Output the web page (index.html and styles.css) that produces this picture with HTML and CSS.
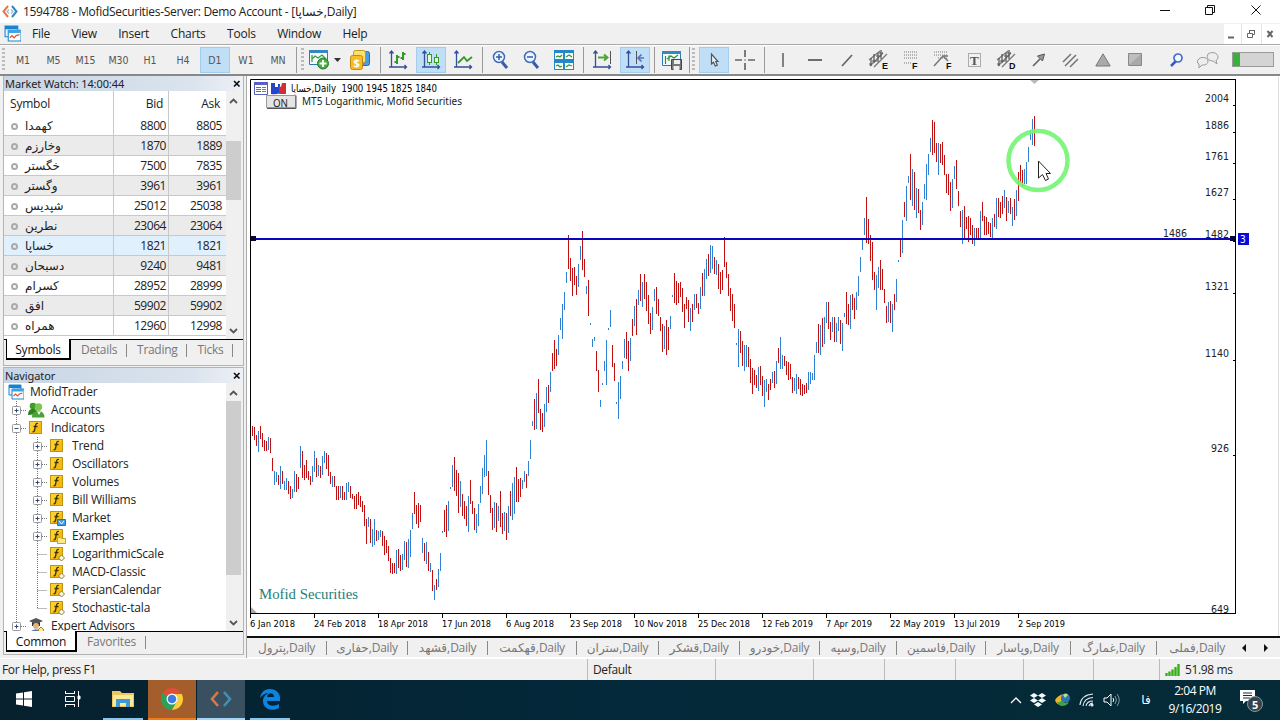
FILE: index.html
```html
<!DOCTYPE html>
<html lang="en">
<head>
<meta charset="utf-8">
<title>MofidTrader</title>
<link rel="stylesheet" href="styles.css">
</head>
<body>
<svg class="defs" aria-hidden="true">
  <symbol id="app" viewBox="0 0 16 16"><path d="M1 1h12v10H1z" fill="#e9f5fd" stroke="#1c86cc"/><path d="M1 1h12v3H1z" fill="#1583d0"/><path d="M4 5h12v10H4z" fill="#fff" stroke="#1c86cc"/><path d="M4 5h11.500v2.500H4z" fill="#38a5e8"/><path d="M5.500 12l2-2 2 2 2-2 3-1" fill="none" stroke="#e0562c" stroke-width="1.200"/></symbol>
  <symbol id="plus" viewBox="0 0 21 18"><path d="M10.500 0v18M15 9.500h6" stroke="#777" stroke-dasharray="1 1"/><rect x="6.500" y="5.500" width="8" height="8" rx="1" fill="#fff" stroke="#999"/><path d="M8.500 9.500h4M10.500 7.500v4" stroke="#33477e"/></symbol>
  <symbol id="minus" viewBox="0 0 21 18"><path d="M10.500 0v18M15 9.500h6" stroke="#777" stroke-dasharray="1 1"/><rect x="6.500" y="5.500" width="8" height="8" rx="1" fill="#fff" stroke="#999"/><path d="M8.500 9.500h4" stroke="#33477e"/></symbol>
  <symbol id="line" viewBox="0 0 21 18"><path d="M10.500 0v18" stroke="#777" stroke-dasharray="1 1"/></symbol>
  <symbol id="mid" viewBox="0 0 21 18"><path d="M10.500 0v18M10.500 9.500h10" stroke="#777" stroke-dasharray="1 1"/></symbol>
  <symbol id="end" viewBox="0 0 21 18"><path d="M10.500 0v10M10.500 9.500h10" stroke="#777" stroke-dasharray="1 1"/></symbol>
  <symbol id="fx" viewBox="0 0 18 16"><rect x="1.500" y="1.500" width="12" height="12" fill="#fbd12e" stroke="#c2930c"/><path d="M2 13L13 2v11z" fill="#f3bb10"/><path d="M10 3.500c-2-.6-2.300.8-2.600 2.500L6.600 10c-.3 1.500-.9 2-2 1.700M5.500 6.500h4" fill="none" stroke="#3d3208" stroke-width="1.300"/></symbol>
  <symbol id="fxcart" viewBox="0 0 18 16"><use href="#fx" width="18" height="16"/><path d="M8.500 9.500h8v6h-8z" fill="#3d9ee8" stroke="#1b74c0"/><path d="M10 11l2.500 3 2.500-3" stroke="#fff" fill="none"/></symbol>
  <symbol id="fxfolder" viewBox="0 0 18 16"><use href="#fx" width="18" height="16"/><path d="M8.500 9.500h3l1 1h4v5h-8z" fill="#fce98c" stroke="#c99e25"/></symbol>
  <symbol id="fxdot" viewBox="0 0 18 16"><use href="#fx" width="18" height="16"/><path d="M12.500 9l3 3-3 3-3-3z" fill="#fffbe0" stroke="#8c7a3a"/></symbol>
  <symbol id="people" viewBox="0 0 18 16"><circle cx="5" cy="4" r="3.300" fill="#3f9d2c"/><path d="M0 13c0-8 9-8 10-1z" fill="#2c8420"/><circle cx="10.500" cy="5" r="3.700" fill="#7ac84e"/><path d="M4 15.500c-.5-9 12.500-9 12.500 0z" fill="#48a534"/><path d="M9 9.500l2 3.500 2-3.500" fill="#fff"/></symbol>
  <symbol id="expert" viewBox="0 0 18 16"><path d="M1 3l7-3 7 3-7 3z" fill="#555"/><path d="M4 4v4h8V4L8 6z" fill="#333"/><circle cx="8" cy="8" r="3" fill="#e4b27e"/><path d="M2 16c0-6 12-6 12 0z" fill="#4a7ab8"/><path d="M13 9l3 3-3 3-3-3z" fill="#ffe69b" stroke="#a88520"/></symbol>
  <symbol id="axes" viewBox="0 0 20 20"><path d="M3.500 1v16h15M1.500 3.500l2-2.500 2 2.500M16.500 15l2 2-2 2M1 17h3" fill="none" stroke="#334f9b" stroke-width="1.300"/></symbol>
  <symbol id="chan" viewBox="0 0 20 20"><path d="M2 17L15 4M6 18L19 5M1 11l11-9" stroke="#777" stroke-width="1.300"/><path d="M3 9v8M6 5v9M10 4v9M13 1v9M4 12h5M8 7h5M1 15h3M11 4h4" stroke="#555" stroke-width="1.200"/></symbol>
</svg>

<header class="titlebar">
  <svg width="17" height="14" viewBox="0 0 17 14"><path d="M6 1L1.500 6.500 6 12" fill="none" stroke="#e5774a" stroke-width="2"/><path d="M10 1l4.500 5.500L10 12" fill="none" stroke="#3586b8" stroke-width="2"/><path d="M7 4.500l-2 2 2 2M9 4.500l2 2-2 2" fill="none" stroke="#8fbcd8" stroke-width="1.200"/></svg>
  <h1>1594788 - MofidSecurities-Server: Demo Account - [خساپا,Daily]</h1>
  <svg class="wincontrols" width="106" height="14" viewBox="0 0 106 14" fill="none" stroke="#111"><path d="M1 7.500h10M46.500 4.500h7v7h-7zM48.500 4.500v-2h7v7h-2M92.500 2.500l9 9M101.500 2.500l-9 9"/></svg>
</header>

<nav class="menubar">
  <svg class="appicon" width="17" height="17"><use href="#app"/></svg>
  <span>File</span><span>View</span><span>Insert</span><span>Charts</span><span>Tools</span><span>Window</span><span>Help</span>
  <svg class="mdi" width="56" height="20" viewBox="0 0 56 20"><path d="M0 0h56v20H0z" fill="#fff"/><path d="M17.500 0v20M37.500 0v20" stroke="#e4e4e4"/><path d="M4 13.500h6" stroke="#666" stroke-width="2"/><path d="M23.500 9.500h5v4h-5zM25.500 9v-2.500h5v4h-2M25 6.500h6" fill="none" stroke="#666"/><path d="M43.500 7l5 6M48.500 7l-5 6" stroke="#666" stroke-width="2"/></svg>
</nav>

<div class="toolbar">
  <i class="grip"></i>
  <b>M1</b><b>M5</b><b>M15</b><b>M30</b><b>H1</b><b>H4</b><b class="on">D1</b><b>W1</b><b>MN</b>
  <i class="sep"></i><i class="grip"></i>
  <svg width="22" height="22" viewBox="0 0 22 22"><path d="M1.500 1.500h18v14h-18z" fill="#f2faff" stroke="#2b7cae"/><path d="M1 1h19v3H1z" fill="#3488bd"/><path d="M4 13V6M4 10l3-3 3 2 4-3 4 4" fill="none" stroke="#3a9d45" stroke-width="1.300"/><circle cx="15" cy="14.500" r="5.500" fill="#45ac3d" stroke="#277e26"/><path d="M15 11v7M11.500 14.500h7" stroke="#fff" stroke-width="2"/></svg>
  <svg width="7" height="4"><path d="M0 0h7L3.500 4z" fill="#333"/></svg>
  <svg width="22" height="22" viewBox="0 0 22 22"><rect x="8.500" y="2.500" width="12" height="14" rx="2" fill="#4c9ae2" stroke="#246eb3"/><rect x="4.500" y="1.500" width="12" height="12" rx="2" fill="#fbe06f" stroke="#c49818"/><rect x="1.500" y="6.500" width="12" height="14" rx="2" fill="#f5bd27" stroke="#bd8b12"/><text x="4.500" y="18" class="dollar">$</text></svg>
  <i class="sep"></i>
  <svg width="20" height="20"><use href="#axes"/><path d="M9 5v9M6.500 12H9M9 7h2.500M15 2v8M12.500 8H15M15 4h2.500" stroke="#329a27" stroke-width="2" fill="none"/></svg>
  <span class="cell on"><svg width="20" height="20"><use href="#axes"/><path d="M8.500 2v13M15.500 4v11" stroke="#329a27"/><rect x="6.500" y="4.500" width="4" height="8" fill="#e9fbe0" stroke="#329a27"/><rect x="13.500" y="7.500" width="4" height="5" fill="#e9fbe0" stroke="#329a27"/></svg></span>
  <svg width="20" height="20"><use href="#axes"/><path d="M5 13l6-6 3 4 5-4" fill="none" stroke="#329a27" stroke-width="1.800"/></svg>
  <i class="sep"></i>
  <svg width="20" height="20" viewBox="0 0 20 20"><path d="M12 12l5 6" stroke="#3b5ca4" stroke-width="3"/><circle cx="9" cy="7" r="5.500" fill="#edf5ff" stroke="#416bb8" stroke-width="1.500"/><path d="M6 7h6M9 4v6" stroke="#315dac" stroke-width="1.500"/></svg>
  <svg width="20" height="20" viewBox="0 0 20 20"><path d="M12 12l5 6" stroke="#3b5ca4" stroke-width="3"/><circle cx="9" cy="7" r="5.500" fill="#edf5ff" stroke="#416bb8" stroke-width="1.500"/><path d="M6 7h6" stroke="#315dac" stroke-width="1.500"/></svg>
  <svg width="20" height="20" viewBox="0 0 20 20"><path d="M0 0h20v20H0z" fill="#2686c8"/><path d="M1 3h8v6H1zM11 3h8v6h-8zM1 13h8v6H1zM11 13h8v6h-8z" fill="#f6fff8"/><path d="M2 7l2-1 2 1 2-2M12 7l3-2 3 2M2 16l2-1 2 2 2-1M12 17l3-2 3 1" fill="none" stroke="#2f9836" stroke-width="1.200"/></svg>
  <i class="sep"></i>
  <svg width="20" height="20"><use href="#axes"/><path d="M18.500 1v13" stroke="#555"/><path d="M6 7.500h9M12 4.500l3.500 3-3.500 3" fill="none" stroke="#48a832" stroke-width="2"/></svg>
  <span class="cell on"><svg width="20" height="20"><use href="#axes"/><path d="M11.500 1v13" stroke="#555"/><path d="M13 8h6M16.500 4.500l-3.500 3.500 3.500 3.500" fill="none" stroke="#5275bd" stroke-width="1.700"/></svg></span>
  <i class="sep"></i>
  <svg width="22" height="22" viewBox="0 0 22 22"><path d="M1.500 2.500h18v14h-18z" fill="#f4fafb" stroke="#2b7cae"/><path d="M1 2h19v3H1z" fill="#3488bd"/><path d="M4.500 15V7M8 12V7h2M6 10l4-3 3 2 4-3" stroke="#328a40" fill="none" stroke-width="1.200"/><path d="M10.500 10.500h10v10h-10z" fill="#777" stroke="#444"/><path d="M13 11h6v4h-6zM12.500 17h6v4h-6z" fill="#eee"/></svg>
  <i class="sep"></i><i class="grip"></i>
  <span class="cell on"><svg width="12" height="18"><path d="M3.500 3v10l2-1.700 1.800 3.700 2-.9-1.600-3.600h2.300z" fill="#e6f2fc" stroke="#555" stroke-width="1.200"/></svg></span>
  <svg width="20" height="22"><path d="M10 1v7M10 14v7M0 11h7M13 11h7M10 10.500v1" stroke="#666" stroke-width="1.700"/></svg>
  <i class="sep"></i>
  <svg width="4" height="16"><path d="M2 1v14" stroke="#666" stroke-width="1.600"/></svg>
  <svg width="14" height="4"><path d="M0 2h14" stroke="#555" stroke-width="1.700"/></svg>
  <svg width="14" height="14"><path d="M2 13L12 2" stroke="#666" stroke-width="1.700"/></svg>
  <svg width="22" height="22"><use href="#chan" width="20" height="20"/><text class="tag" x="14" y="20">E</text></svg>
  <svg width="18" height="20"><path d="M1 2h13M1 5h13M1 8h13M1 13h7" stroke="#777" stroke-dasharray="1 1"/><text class="tag" x="9" y="19">F</text></svg>
  <svg width="20" height="20"><path d="M1 2h14M1 5h14M5 8h10" stroke="#777" stroke-dasharray="1 1"/><path d="M1 16L10 6l5 5M10 6h5" fill="none" stroke="#777" stroke-width="1.500"/><text class="tag" x="13" y="19">F</text></svg>
  <svg width="16" height="18"><path d="M1.500 2.500h12v13h-12z" fill="none" stroke="#666" stroke-dasharray="1 1"/><text class="tee" x="3" y="14">T</text></svg>
  <svg width="22" height="22"><use href="#chan" width="20" height="20"/><text class="tag" x="13" y="20">D</text></svg>
  <svg width="16" height="16"><path d="M2 14L9 7" stroke="#666" stroke-width="1.700"/><path d="M6.500 4l7-2-2 7z" fill="#999" stroke="#555"/></svg>
  <svg width="18" height="16"><path d="M1 10l8-8M3 14L14 3M8 15l8-8" stroke="#777" stroke-width="1.600"/></svg>
  <svg width="16" height="14"><path d="M8 .8L15.200 13H.8z" fill="#aaa" stroke="#777"/></svg>
  <svg width="15" height="15" viewBox="0 0 15 15"><path d="M.5 1.500h13v12H.5z" fill="#a9a9a9" stroke="#888"/><path d="M1 13L1 2h12z" fill="#bebebe"/></svg>
  <svg class="find" width="16" height="16"><path d="M2 14l5-5" stroke="#315bc0" stroke-width="2.500"/><circle cx="9" cy="6" r="4" fill="#f5faff" stroke="#426ccd" stroke-width="1.700"/></svg>
  <svg width="24" height="18" viewBox="0 0 24 18" fill="#eee" stroke="#999"><path d="M12 3c4-3 10-1 10 3 0 2-1 3-2 3l1 4-4-3c-5 0-7-4-5-7z"/><path d="M2 9c2-4 10-3 10 1s-4 4-6 4l-3 3v-4c-2-1-2-3-1-4z"/></svg>
  <i class="battery"></i>
</div>

<main class="workspace">
  <aside>
    <section class="panel watch">
      <h2>Market Watch: 14:00:44<svg width="8" height="8"><path d="M1 1l5.500 5.500M6.500 1L1 6.500" stroke="#111" stroke-width="1.700"/></svg></h2>
      <div class="body">
        <div class="table">
          <div class="row head"><span>Symbol</span><span>Bid</span><span>Ask</span></div>
          <div class="row"><span>کهمدا</span><span>8800</span><span>8805</span></div>
          <div class="row"><span>وخارزم</span><span>1870</span><span>1889</span></div>
          <div class="row"><span>خگستر</span><span>7500</span><span>7835</span></div>
          <div class="row"><span>وگستر</span><span>3961</span><span>3961</span></div>
          <div class="row"><span>شپدیس</span><span>25012</span><span>25038</span></div>
          <div class="row"><span>نطرین</span><span>23064</span><span>23064</span></div>
          <div class="row sel"><span>خساپا</span><span>1821</span><span>1821</span></div>
          <div class="row"><span>دسبحان</span><span>9240</span><span>9481</span></div>
          <div class="row"><span>کسرام</span><span>28952</span><span>28999</span></div>
          <div class="row"><span>افق</span><span>59902</span><span>59902</span></div>
          <div class="row"><span>همراه</span><span>12960</span><span>12998</span></div>
        </div>
        <div class="scroll"><svg width="9" height="6"><path d="M1 5l3.500-3.500L8 5" fill="none" stroke="#555" stroke-width="1.800"/></svg><i></i><svg width="9" height="6"><path d="M1 1l3.500 3.500L8 1" fill="none" stroke="#555" stroke-width="1.800"/></svg></div>
      </div>
      <div class="tabs"><b>Symbols</b><span>Details</span><span>Trading</span><span>Ticks</span></div>
    </section>
    <section class="panel navi">
      <h2>Navigator<svg width="8" height="8"><path d="M1 1l5.500 5.500M6.500 1L1 6.500" stroke="#111" stroke-width="1.700"/></svg></h2>
      <div class="body">
        <ul>
          <li class="root"><svg width="16" height="16"><use href="#app"/></svg>MofidTrader</li>
          <li><svg width="21" height="18"><use href="#plus"/></svg><svg class="l1" width="18" height="16"><use href="#people"/></svg>Accounts</li>
          <li><svg width="21" height="18"><use href="#minus"/></svg><svg class="l1" width="18" height="16"><use href="#fx"/></svg>Indicators</li>
          <li><svg width="21" height="18"><use href="#line"/></svg><svg width="21" height="18"><use href="#plus"/></svg><svg class="l2" width="18" height="16"><use href="#fx"/></svg>Trend</li>
          <li><svg width="21" height="18"><use href="#line"/></svg><svg width="21" height="18"><use href="#plus"/></svg><svg class="l2" width="18" height="16"><use href="#fx"/></svg>Oscillators</li>
          <li><svg width="21" height="18"><use href="#line"/></svg><svg width="21" height="18"><use href="#plus"/></svg><svg class="l2" width="18" height="16"><use href="#fx"/></svg>Volumes</li>
          <li><svg width="21" height="18"><use href="#line"/></svg><svg width="21" height="18"><use href="#plus"/></svg><svg class="l2" width="18" height="16"><use href="#fx"/></svg>Bill Williams</li>
          <li><svg width="21" height="18"><use href="#line"/></svg><svg width="21" height="18"><use href="#plus"/></svg><svg class="l2" width="18" height="16"><use href="#fxcart"/></svg>Market</li>
          <li><svg width="21" height="18"><use href="#line"/></svg><svg width="21" height="18"><use href="#plus"/></svg><svg class="l2" width="18" height="16"><use href="#fxfolder"/></svg>Examples</li>
          <li><svg width="21" height="18"><use href="#line"/></svg><svg width="21" height="18"><use href="#mid"/></svg><svg class="l2" width="18" height="16"><use href="#fxdot"/></svg>LogarithmicScale</li>
          <li><svg width="21" height="18"><use href="#line"/></svg><svg width="21" height="18"><use href="#mid"/></svg><svg class="l2" width="18" height="16"><use href="#fxdot"/></svg>MACD-Classic</li>
          <li><svg width="21" height="18"><use href="#line"/></svg><svg width="21" height="18"><use href="#mid"/></svg><svg class="l2" width="18" height="16"><use href="#fxdot"/></svg>PersianCalendar</li>
          <li><svg width="21" height="18"><use href="#line"/></svg><svg width="21" height="18"><use href="#end"/></svg><svg class="l2" width="18" height="16"><use href="#fxdot"/></svg>Stochastic-tala</li>
          <li><svg width="21" height="18"><use href="#plus"/></svg><svg class="l1" width="18" height="16"><use href="#expert"/></svg>Expert Advisors</li>
        </ul>
        <div class="scroll"><svg width="9" height="6"><path d="M1 5l3.500-3.500L8 5" fill="none" stroke="#555" stroke-width="1.800"/></svg><i></i><svg width="9" height="6"><path d="M1 1l3.500 3.500L8 1" fill="none" stroke="#555" stroke-width="1.800"/></svg></div>
      </div>
      <div class="tabs"><b>Common</b><span>Favorites</span></div>
    </section>
  </aside>

  <section class="chartpane">
    <svg id="chart" width="1033" height="560" viewBox="247 76 1033 560">
      <path d="M1278.500 77v560" stroke="#ddd"/>
      <path d="M250.500 614V79.500h985v534" fill="none" stroke="#000"/>
      <path d="M250 613.500h986M1235.500 79v535" stroke="#000"/>
      <path d="M251 607l6 6h-6z" fill="#aaa"/>
      <path d="M1030 80h9l-4.500 4z" fill="#bbb"/>
      <g><path d="M254.500 82.500h13v12h-13z" fill="#fff" stroke="#5561b8"/><path d="M254 82h14v3h-14z" fill="#5561c8"/><path d="M256 87.500h5M256 89.500h5M256 91.500h5" stroke="#5b6bc8"/><path d="M262 87.500h4M262 89.500h4M262 91.500h4" stroke="#d85050"/><path d="M271 83h4v4h3v-3h2v9q-4 2-9 1z" fill="#2544c8"/><path d="M279 86l2 1 1-4h4v11h-7z" fill="#cc3038"/></g>
      <text class="quote" x="291" y="92" textLength="146" lengthAdjust="spacingAndGlyphs" xml:space="preserve">خساپا,Daily  1900 1945 1825 1840</text>
      <path d="M266.500 95.500h29v12h-29z" fill="#e5e5e5" stroke="#999"/><path d="M267 108.500h29v-13" fill="none" stroke="#555"/>
      <text class="ui" x="273" y="107" textLength="15" lengthAdjust="spacingAndGlyphs">ON</text>
      <text class="ui" x="302" y="105" textLength="160" lengthAdjust="spacingAndGlyphs">MT5 Logarithmic, Mofid Securities</text>
      <path id="up" stroke="#2f80d0"/>
      <path id="down" stroke="#c01010"/>
      <g class="price" id="prices"></g>
      <path d="M252 239h983" stroke="#0a06c0" stroke-width="2"/>
      <path d="M251 236h5v5h-5zM1230 236h5v5h-5z" fill="#06063c"/>
      <path d="M1238 233h11v12h-11z" fill="#0a0ad8"/>
      <text x="1240" y="243" class="badge">3</text>
      <text class="price" x="1163" y="237" textLength="24" lengthAdjust="spacingAndGlyphs">1486</text>
      <text class="brand" x="259" y="599" textLength="99" lengthAdjust="spacingAndGlyphs">Mofid Securities</text>
      <g class="time" id="times"></g>
      <circle cx="1038" cy="160.500" r="29.500" fill="none" stroke="#72f472" stroke-opacity=".9" stroke-width="4.500"/>
      <path d="M1038.500 161v17l4-3.500 3 6 3-1.500-2.500-5.500h4.500z" fill="#fff" stroke="#222"/>
    </svg>
    <div class="charttabs"><span>پترول,Daily</span><span>حفاری,Daily</span><span>قشهد,Daily</span><span>قهکمت,Daily</span><span>ستران,Daily</span><span>قشکر,Daily</span><span>خودرو,Daily</span><span>وسپه,Daily</span><span>فاسمین,Daily</span><span>وپاسار,Daily</span><span>غمارگ,Daily</span><span>فملی,Daily</span><svg width="28" height="8"><path d="M5 0v8L1 4zM23 0v8l4-4z" fill="#111"/></svg></div>
  </section>
</main>

<footer class="status"><span>For Help, press F1</span><span>Default</span><span></span><span></span><span></span><span></span><span></span><span></span><span class="ping"><svg width="16" height="12"><path d="M1.500 12V9M4.500 12V7.500M7.500 12V5.500M10.500 12V3M13.500 12V0" stroke="#36b016" stroke-width="2.400"/></svg>51.98 ms</span></footer>

<div class="taskbar">
  <span class="task"><svg width="16" height="16"><path d="M0 2.500l7-1V7.500H0zM8 1.300L16 0v7.500H8zM0 8.500h7v6l-7-1zM8 8.500h8V16l-8-1.300z" fill="#fff"/></svg></span>
  <span class="task"><svg width="17" height="16" fill="none" stroke="#fff"><path d="M1 2.500h10M1 13.500h10M1.500 5.500h9v5h-9zM1.500 0v2M10.500 0v2M1.500 14v2M10.500 14v2M14.500 0v16"/><path d="M14 5h2v3h-2z" fill="#fff"/></svg></span>
  <span class="task open explorer"><svg width="22" height="20"><path d="M0 2h8l2 2h12v14H0z" fill="#edc65f"/><path d="M1 6h20v11H1z" fill="#fce89b"/><path d="M4 18v-8h14v8h-4v-4H8v4z" fill="#3e9bd1"/></svg></span>
  <span class="task chrome"><svg width="24" height="24" viewBox="0 0 24 24"><circle cx="12" cy="12" r="11" fill="#e04d39"/><path d="M2.500 6.500A11 11 0 0 0 12 23l4.500-8.500L12 12z" fill="#29a35a"/><path d="M12 7h9.800A11 11 0 0 1 12 23l4.500-8z" fill="#f8cf38"/><circle cx="12" cy="12" r="5.500" fill="#fff"/><circle cx="12" cy="12" r="4.300" fill="#3f7ddd"/></svg></span>
  <span class="task mt"><svg width="24" height="18" fill="none" stroke-width="2.600"><path d="M9 2L3 9l6 7" stroke="#d7784a"/><path d="M15 2l6 7-6 7" stroke="#438fb2"/></svg></span>
  <span class="task open edge"><svg width="22" height="22" viewBox="0 0 22 22"><path d="M1 10C2 4 6 1 11 1c6 0 10 4 10 9v3H8c0 5 7 6 12 3v4c-7 4-16 1-16-7 0-4 3-7 6-8-4 0-7 2-9 5zM8 9h7c0-5-6-5-7 0z" fill="#0d84df"/></svg></span>
  <div class="tray">
    <svg width="12" height="8"><path d="M1 7l5-5 5 5" fill="none" stroke="#fff" stroke-width="1.300"/></svg>
    <svg width="16" height="15"><path d="M4 0l4 2.500L4 5 0 2.500zM12 0l4 2.500L12 5 8 2.500zM4 5l4 2.500L4 10 0 7.500zM12 5l4 2.500-4 2.500-4-2.500zM8 9l4 2.500L8 14l-4-2.500z" fill="#f4fbff"/></svg>
    <svg width="16" height="14" viewBox="0 0 16 14"><path d="M0 7Q3 2 9 1L6 6l2 4-3 2Q1 11 0 7z" fill="#e8b52f"/><circle cx="10.500" cy="5" r="4.500" fill="#2f74ba"/><path d="M8 2q3-3 5 0l-3 3z" fill="#b5e08c"/><path d="M2 9q3 1 5-2 1 4 7 2-2 4-7 4-3 0-5-4z" fill="#3fa446"/></svg>
    <svg width="15" height="14" fill="none" stroke="#e7f0f3" stroke-width="1.100"><path d="M1 12Q2 2 14 1M4 13Q5 5 14 4.500M7 13q1-5 7-5M10 13q1-3 4-3"/><circle cx="13" cy="12" r="1" fill="#fff"/></svg>
    <svg width="17" height="14" fill="none" stroke="#fff"><path d="M1 5h3l4-4v12L4 9H1z"/><path d="M10 5q1.500 2 0 4"/><path d="M12 3q3 4 0 8M14 1q4.500 6 0 12" opacity=".5"/></svg>
    <span class="lang">فا</span>
    <span class="clock">2:04 PM<br>9/16/2019</span>
    <svg width="26" height="26"><path d="M1 3h15v11H7l-3 3v-3H1z" fill="#fff"/><path d="M4 6h9M4 8.500h9M4 11h7" stroke="#12303c"/><circle cx="16" cy="17" r="7.500" fill="#35434b" stroke="#8a959a"/><text x="13" y="21.500" class="count">5</text></svg>
  </div>
</div>
<script src="chart.js"></script>
</body>
</html>
```

FILE: styles.css
```css
*, *::before { box-sizing: border-box; }
body { margin: 0; width: 1280px; height: 720px; overflow: hidden; background: #f0f0f0; color: #222; font: 12px/18px "Open Sans", "DejaVu Sans", sans-serif; letter-spacing: -0.2px; display: flex; flex-direction: column; }
svg { display: block; flex: none; }
.defs { width: 0; height: 0; position: absolute; }

.titlebar { flex: none; height: 23px; background: #fff; display: flex; align-items: center; padding-left: 2px; }
.titlebar h1 { margin: 0 0 0 4px; font-size: 12px; font-weight: 400; letter-spacing: -0.3px; }
.wincontrols { margin: -3px 15px 0 auto; }

.menubar { flex: none; height: 21px; display: flex; align-items: center; padding-left: 4px; letter-spacing: -0.250px; }
.appicon { margin-right: 11px; }
.menubar span { margin-right: 21.500px; }
.mdi { margin-left: auto; }

.toolbar { flex: none; height: 32px; border-top: 1px solid #aaa; border-bottom: 2px solid #888; box-shadow: inset 0 1px #fff; display: grid; align-items: center; justify-items: center; grid-template-columns: 7px 32px 29px 35px 31px 32px 34px 30px 32px 32px 4px 8px 26px 10px 36px 4px 32px 34px 29px 10px 26px 36px 30px 8px 30px 36px 2px 34px 1px 7px 33px 30px 8px 30px 34px 30px 34px 32px 30px 34px 30px 34px 29px 36px 28px 45px 28px 58px; }
.toolbar b { font: 10.500px/26px "DejaVu Sans Condensed", sans-serif; letter-spacing: 0; color: #555; }
.toolbar .on { background: #c0def5; border: 1px solid #a3cdec; width: 30px; height: 26px; display: flex; align-items: center; justify-content: center; }
.grip { width: 3px; height: 24px; background: repeating-linear-gradient(#bbb 0 2px, #f0f0f0 2px 4px); }
.sep { width: 1px; height: 26px; background: #999; }
.find { margin-left: 11px; }
.battery { width: 42px; height: 15px; border: 1px solid #999; background: linear-gradient(90deg, #36b336 7px, #d4d4d4 7px); margin-left: 4px; }
.dollar { font: bold 11px "Open Sans", sans-serif; fill: #fff; }
.tag { font: bold 9px "Liberation Sans", sans-serif; fill: #111; }
.tee { font: bold 13px "Liberation Serif", serif; fill: #555; }

.workspace { flex: none; height: 582px; display: flex; }
aside { width: 247px; padding-left: 3px; display: flex; flex-direction: column; border-right: 1px solid #aaa; }
.panel { width: 241px; border: 1px solid #b4b4b4; border-top: 0; display: flex; flex-direction: column; }
.watch { height: 290px; }
.navi { height: 288px; margin-top: 1px; border-top: 1px solid #b4b4b4; }
.panel h2 { flex: none; margin: 0; height: 15px; padding: 0 2px 0 1px; font: 11px/14px "Noto Sans", "Open Sans", sans-serif; letter-spacing: -0.1px; background: linear-gradient(90deg, #c8d5e4, #dbe4ee 80%, #eef1f5); display: flex; align-items: center; justify-content: space-between; }
.body { flex: 1; min-height: 0; display: flex; background: #fff; overflow: hidden; }
.watch .body { border-bottom: 1px solid #000; }
.table { width: 222px; overflow: hidden; }
.row { height: 20px; display: grid; grid-template-columns: 110px 55px 56px; border-bottom: 1px solid #c8c8c8; line-height: 20px; letter-spacing: -0.450px; }
.row span { text-align: right; padding-right: 2px; border-right: 1px solid #c8c8c8; }
.row span:last-child { border-right: 0; padding-right: 3px; }
.row span:first-child { text-align: left; padding-left: 7px; letter-spacing: 0; display: flex; align-items: center; }
.row:not(.head) span:first-child::before { content: ""; width: 7px; height: 7px; border: 2px solid #aaa; border-radius: 50%; margin-right: 7px; }
.row.head { height: 25px; border-bottom: 0; line-height: 25px; letter-spacing: -0.250px; }
.row.head span { padding-right: 5px; }
.row.head span:first-child { padding-left: 6px; letter-spacing: -0.200px; }
.row:nth-child(odd) { background: #ebebeb; }
.row.head { background: #fff; }
.row.sel { background: #e1f0fd; }
.scroll { width: 17px; margin-left: auto; background: #f0f0f0; display: flex; flex-direction: column; align-items: center; padding: 7px 3px 5px 0; }
.scroll i { width: 15px; background: #cdcdcd; }
.watch .scroll i { height: 59px; margin: 37px 0 auto; }
.navi .scroll i { height: 174px; margin: 5px 0 auto; }
.tabs { flex: none; height: 25px; padding-left: 2px; display: flex; align-items: flex-start; line-height: 18px; color: #777; }
.tabs b { font-weight: 400; color: #111; background: #fff; border: 1px solid #000; border-width: 0 2px 2px 1px; height: 21px; width: 65px; text-align: center; margin-top: -1px; line-height: 21px; }
.tabs span { padding: 0 10px; position: relative; line-height: 20px; letter-spacing: -0.300px; }
.tabs span::after { content: ""; position: absolute; right: 0; top: 4px; height: 13px; border-right: 1px solid #888; }
.navi .tabs { border-top: 1px solid #000; height: 23px; }
.navi .tabs b { width: 71px; }
.navi .tabs span { line-height: 19px; letter-spacing: -0.200px; }
ul { list-style: none; margin: 0; padding: 0 0 0 2px; width: 221px; }
li { display: flex; align-items: center; height: 18px; white-space: nowrap; }
.root svg { margin: 0 6px 0 2px; }
.l1 { margin: 0 5px 0 1px; }
.l2 { margin: 0 5px 0 1px; }

.chartpane { flex: 1; min-width: 0; background: #fff; display: flex; flex-direction: column; }
.ui { font: 11px "Noto Sans", sans-serif; letter-spacing: 0; fill: #222; }
.quote { font: 10px "DejaVu Sans Condensed", sans-serif; letter-spacing: 0; }
.price { font: 10.500px "DejaVu Sans Condensed", sans-serif; letter-spacing: 0; fill: #222; }
.time { font: 9.500px "DejaVu Sans Condensed", sans-serif; letter-spacing: 0; fill: #000; }
.badge { font: 10px "DejaVu Sans Condensed", sans-serif; fill: #fff; }
.brand { font: 15px "Liberation Serif", serif; letter-spacing: 0; fill: #1d8079; }
.charttabs { flex: none; height: 22px; border-top: 2px solid #111; border-bottom: 1px solid #fff; background: #f0f0f0; color: #777; display: grid; align-items: center; grid-template-columns: 80px 81px 80px 89px 82px 81px 80px 77px 89px 85px 86px 80px 40px; }
.charttabs span { text-align: center; border-right: 1px solid #888; line-height: 13px; height: 14px; white-space: nowrap; letter-spacing: -0.300px; }
.charttabs span:nth-child(12) { border-right: 0; }
.charttabs svg { margin-left: 4px; }

.status { flex: none; height: 22px; border-top: 1px solid #fff; display: grid; grid-template-columns: 588px 128px 98px 71px 71px 68px 70px 66px 120px; line-height: 22px; letter-spacing: -0.350px; }
.status span { border-right: 1px solid #bbb; padding-left: 5px; }
.status span:first-child { padding-left: 2px; }
.status .ping { display: flex; align-items: center; border-right: 0; gap: 4px; }

.taskbar { flex: none; height: 40px; background: linear-gradient(90deg, #06202e, #03293a 50%, #052b38); display: flex; color: #fff; }
.task { width: 48px; display: flex; align-items: center; justify-content: center; border-bottom: 2px solid transparent; }
.open { width: 40px; border-color: #8ac5ee; }
.explorer { margin: 0 5px 0 7px; }
.chrome { background: #a35e2c; border-color: #f47a13; }
.mt { background: #38505f; border-color: #a3d5f6; margin: 0 5px 0 1px; }
.tray { margin-left: auto; display: flex; align-items: center; padding-right: 15px; }
.tray > svg { margin-right: 8.500px; }
.tray > svg:last-child { margin-right: 0; }
.lang { width: 26px; text-align: center; margin-left: 5px; }
.clock { width: 72px; text-align: center; line-height: 18px; letter-spacing: -0.450px; margin-right: 8px; }
.count { font: bold 11px "Open Sans", sans-serif; fill: #fff; }
```

FILE: chart.js
```js
// Daily ranges, one per bar: direction, high y, low y. Bars are two pixels apart.
const bars = `r426-436 r427-440 r435-446 b431-452 r426-439 r433-447 r440-451 r441-451 b437-450 r438-453
r458-471 b471-485 b472-482 r475-485 b466-489 r471-484 b481-490 b478-490 r481-494 r486-499
b489-498 b471-492 r474-492 r477-489 b446-468 r451-478 r465-480 r460-478 r471-480 r476-485
b466-482 b451-472 r458-477 b465-476 r466-478 b456-475 b451-463 r453-469 r455-476 r472-484
b476-487 r476-487 r486-500 r486-500 b486-498 r486-500 r492-500 b483-500 b482-492 r486-498
r494-499 r496-509 r494-509 r492-505 r496-507 r501-512 r505-526 r519-544 b517-527 r519-543
b529-547 b519-545 r530-541 b531-540 b530-537 r531-546 r536-555 r540-553 r546-561 r558-573
r563-574 r563-573 b550-574 r549-568 r555-571 b554-570 b541-560 r542-567 b539-568 b530-557
b513-529 r492-514 r505-524 r503-528 r505-522 b538-553 r543-561 b542-564 r552-571 b563-572
r570-591 b585-600 r579-590 b569-587 b553-571 b531-533 r510-532 r505-537 b501-531 b487-489
b465-487 r457-491 r470-496 r473-513 b481-507 r494-516 r501-519 r506-526 b496-532 r480-504
r501-514 r508-530 b514-533 b504-526 b486-503 b468-494 b455-477 b440-476 r471-495 r495-513
r508-530 b502-528 r503-532 b506-521 r491-527 r513-534 b512-531 r513-540 b506-533 r491-516
b483-520 b477-514 r467-502 r479-502 r478-497 b480-489 b471-482 r474-488 b461-476 b440-459
b421-426 r399-430 b393-429 r379-413 r409-430 r413-432 b404-427 b387-412 r385-403 b372-392
r353-371 r340-369 r349-366 b335-355 b318-330 b304-339 b292-310 b272-283 r235-269 r258-281
r268-296 r267-285 r276-295 b264-287 b246-260 r231-270 r259-277 b286-294 r280-316 b323-325
b339-347 b337-341 r351-371 r370-392 b400-407 b383-385 b361-371 b340-385 b328-330 b310-327
r345-367 r363-381 b402-404 b382-419 b376-399 b361-369 b339-358 r332-359 r341-371 b338-361
r319-336 b306-326 r299-335 b290-305 r274-301 b282-307 r274-299 r282-311 r295-324 r313-334
b307-330 b289-301 r287-314 r299-316 r317-331 r324-352 b326-349 r320-355 r327-350 b316-329
b295-297 r273-303 r281-305 r283-303 r282-297 r288-312 r304-328 r297-309 r300-322 b308-331
r304-322 b294-310 r294-308 r303-314 b287-309 r273-296 b269-296 b259-279 r254-276 b245-273
b246-269 r257-274 b260-275 r264-289 r272-294 r270-290 r237-267 r262-278 r274-296 r288-311
r294-321 r304-328 b343-345 b329-367 r331-353 r341-366 b345-371 b345-367 r347-367 r359-383
r368-394 r370-385 r375-388 b367-391 r366-385 r376-396 b380-407 b379-392 r384-400 r379-390
b372-383 r371-388 b361-384 r348-363 b337-369 b355-369 r356-366 r361-375 r362-380 r364-379
r377-393 b378-391 b374-394 r377-389 r379-395 r384-396 r385-394 r383-393 b372-390 b372-384
b373-380 b355-380 b342-353 r324-353 b325-355 r318-347 b317-344 b302-323 r302-329 r322-340
b317-332 r317-342 b323-342 b317-331 r320-344 b323-351 b313-317 r292-324 r304-325 b295-329
r294-310 r298-319 b292-310 b276-296 b257-272 b239-250 b218-235 r197-243 r219-244 r235-261
r242-280 r272-290 b275-310 b267-288 r260-290 r269-290 r289-303 r306-323 b302-322 r301-323
b304-332 r294-310 b279-302 b260-262 r240-257 b220-253 r202-217 b186-221 b176-183 r154-200
b169-206 r172-210 b188-218 r189-213 r210-230 b202-225 b184-199 b164-200 b154-175 b138-152
r120-155 r122-153 r143-162 b143-175 r144-163 r142-165 r155-175 r174-193 r174-195 r182-211
b179-208 b166-179 r160-189 r191-206 r211-227 b210-244 r206-239 r217-229 r216-242 r218-235
r225-244 b228-246 r228-239 r228-240 b211-240 r202-221 r216-235 r217-235 r222-234 r223-237
b218-238 r214-227 b198-229 r198-217 r202-218 r196-214 b190-208 r197-221 b201-213 r198-214
b207-226 r199-220 b190-216 r172-201 r165-183 r170-187 b169-184 b162-184 b147-162 b131-140
b119-145 r116-146`.split(/\s+/);

const paths = { r: "", b: "" };
bars.forEach((bar, i) => {
  const [high, low] = bar.slice(1).split("-");
  paths[bar[0]] += `M${252.5 + i * 2} ${high}V${low}`;
});
document.getElementById("down").setAttribute("d", paths.r);
document.getElementById("up").setAttribute("d", paths.b);

const prices = [[2004, 105], [1886, 132], [1761, 163], [1627, 199], [1482, 241], [1321, 293], [1140, 360], [926, 455], [649, 613]];
document.getElementById("prices").innerHTML = prices.map(([value, y]) => {
  const width = value > 999 ? 24 : 18;
  const base = value === 1482 ? 238 : Math.min(y - 3, 612);
  return `<text x="${1229 - width}" y="${value === 649 ? 613 : base}" textLength="${width}" lengthAdjust="spacingAndGlyphs">${value}</text>` +
    `<path d="M1233 ${y + 0.5}h3" stroke="#000"/>`;
}).join("");

const dates = [["6 Jan 2018", 45], ["24 Feb 2018", 52], ["18 Apr 2018", 50], ["17 Jun 2018", 49], ["6 Aug 2018", 48], ["23 Sep 2018", 52], ["10 Nov 2018", 53], ["25 Dec 2018", 52], ["12 Feb 2019", 51], ["7 Apr 2019", 46], ["22 May 2019", 55], ["13 Jul 2019", 46], ["2 Sep 2019", 47]];
document.getElementById("times").innerHTML = dates.map(([label, width], i) => {
  const x = 250 + i * 64;
  return `<text x="${x}" y="627" textLength="${width}" lengthAdjust="spacingAndGlyphs">${label}</text>` +
    `<path d="M${x + 0.5} 614v4" stroke="#000"/>`;
}).join("");
```
